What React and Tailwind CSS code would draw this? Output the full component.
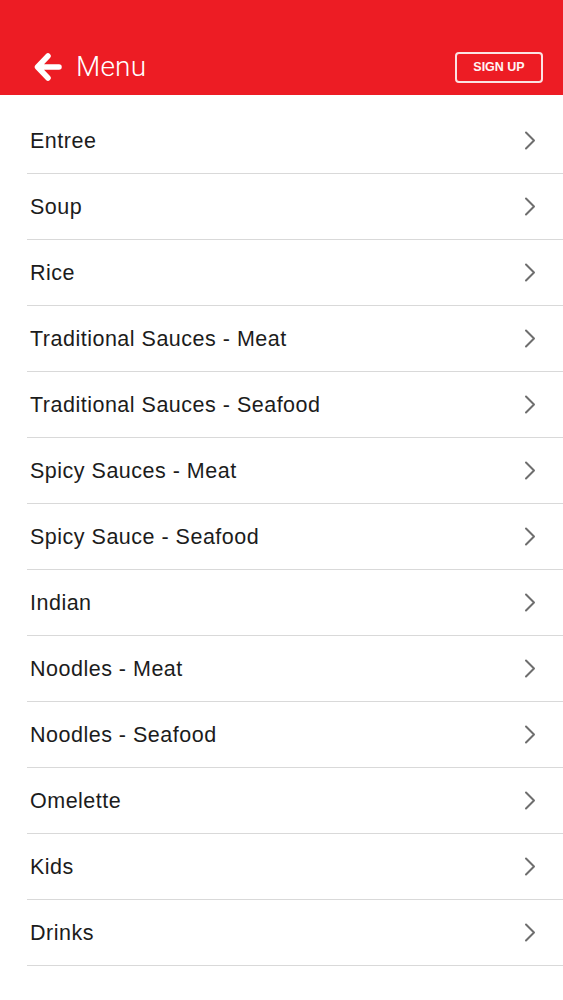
import React from 'react'

const items = [
  'Entree',
  'Soup',
  'Rice',
  'Traditional Sauces - Meat',
  'Traditional Sauces - Seafood',
  'Spicy Sauces - Meat',
  'Spicy Sauce - Seafood',
  'Indian',
  'Noodles - Meat',
  'Noodles - Seafood',
  'Omelette',
  'Kids',
  'Drinks',
]

const BackArrow = () => (
  <svg width="28" height="30" viewBox="0 0 28 30" fill="none">
    <path
      d="M25 15H5M14 4L3.5 15L14 26"
      stroke="white"
      strokeWidth="5.5"
      strokeLinecap="round"
      strokeLinejoin="round"
    />
  </svg>
)

const Chevron = () => (
  <svg width="12" height="19" viewBox="0 0 12 19" fill="none">
    <path d="M2 1.5L10 9.5L2 17.5" stroke="#6e6e6e" strokeWidth="2" strokeLinecap="round" strokeLinejoin="round" />
  </svg>
)

export default function App() {
  return (
    <div className="min-h-[1000px] bg-white font-['Liberation_Sans',Arial,sans-serif]">
      <header className="h-[95px] bg-[#ed1c24] flex items-end pb-[13px] pl-[34px] pr-[20px]">
        <div className="flex items-center gap-[14px] flex-1">
          <BackArrow />
          <span className="text-white text-[28px] font-light font-['Roboto',sans-serif] leading-none tracking-[0.2px]">
            Menu
          </span>
        </div>
        <button className="w-[88px] h-[31px] mb-[-1px] border-2 border-[#fbe3e3] rounded-[4px] text-[#fff4f4] text-[12.5px] font-bold flex items-center justify-center">
          SIGN UP
        </button>
      </header>

      <ul className="pt-[13px]">
        {items.map((it) => (
          <li key={it} className="ml-[27px] h-[66px] border-b border-[#d9d9d9] flex items-center justify-between pl-[3px] pr-[27px]">
            <span className="text-[21.5px] tracking-[0.5px] text-[#1c1c1c] pt-[2px]">{it}</span>
            <Chevron />
          </li>
        ))}
      </ul>
    </div>
  )
}
